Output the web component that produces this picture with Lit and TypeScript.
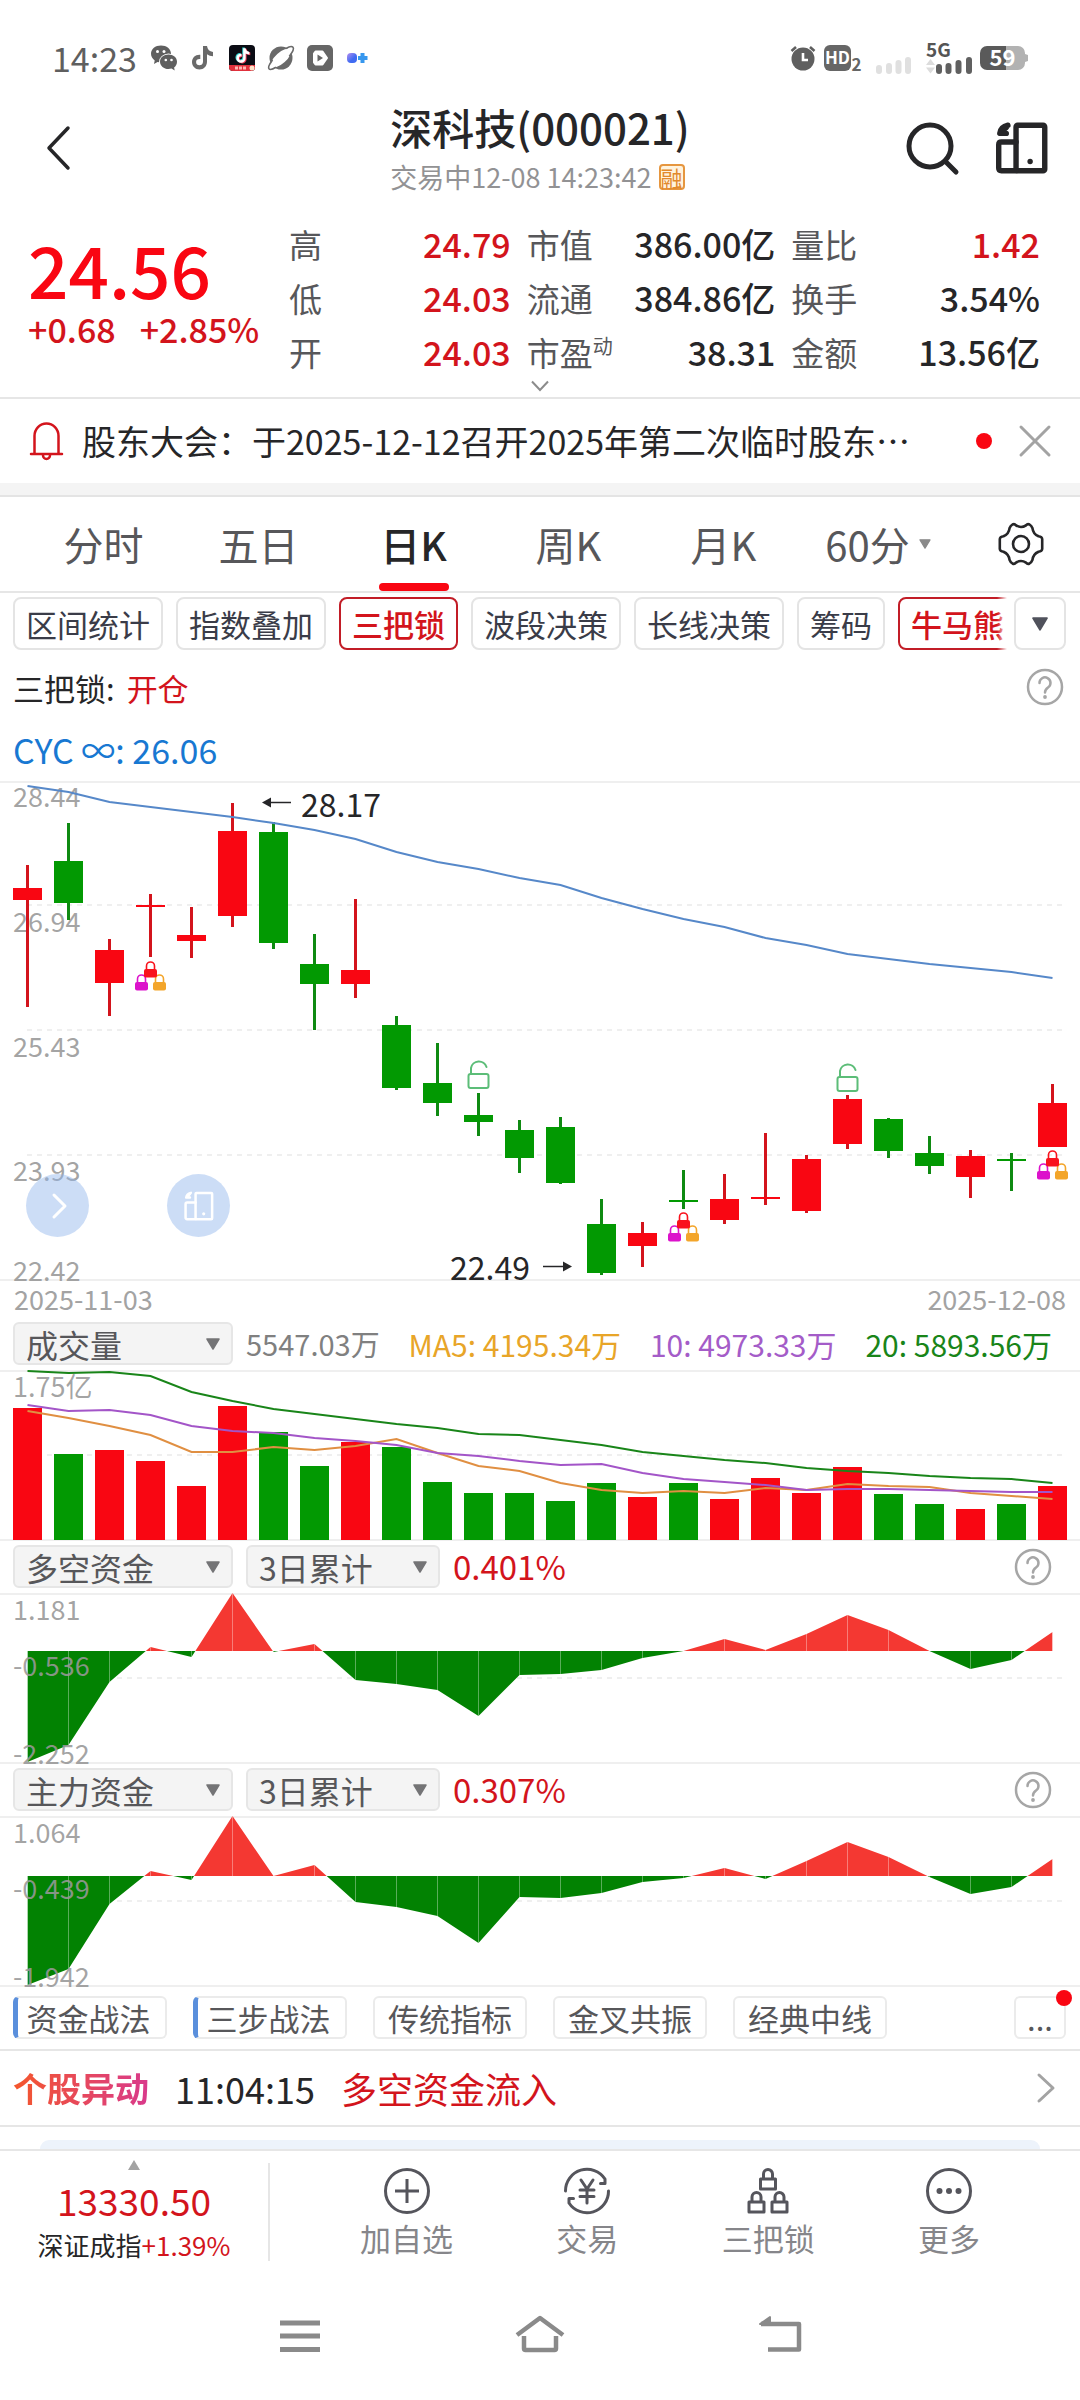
import { LitElement, html, svg, css } from "lit";
import { customElement, property } from "lit/decorators.js";
import { classMap } from "lit/directives/class-map.js";

const UP = "#f90612";
const DOWN = "#029902";
const COUNT = 26;
const cx = (i: number) => 27.5 + i * 41;
const linePoints = (ys: number[]) => ys.map((y, i) => `${cx(i)},${y}`).join(" ");

type Candle = { up: boolean; high: number; top: number; bottom: number; low: number };
const c = (dir: string, high: number, top: number, bottom: number, low: number): Candle => ({
  up: dir === "u", high, top, bottom, low,
});

const CANDLES: Candle[] = [
  c("u", 84, 107, 119, 226), c("d", 42, 80, 122, 139), c("u", 158, 169, 202, 235),
  c("u", 113, 124, 126, 176), c("u", 126, 154, 160, 177), c("u", 22, 50, 135, 146),
  c("d", 41, 51, 162, 168), c("d", 153, 183, 203, 249), c("u", 118, 189, 203, 217),
  c("d", 235, 244, 307, 309), c("d", 262, 302, 322, 335), c("d", 312, 334, 341, 355),
  c("d", 339, 349, 377, 392), c("d", 336, 346, 402, 403), c("d", 418, 443, 492, 494),
  c("u", 441, 452, 465, 486), c("d", 389, 419, 421, 428), c("u", 393, 418, 439, 443),
  c("u", 352, 416, 418, 424), c("u", 374, 378, 430, 432), c("u", 314, 318, 363, 368),
  c("d", 337, 338, 370, 377), c("d", 355, 372, 385, 393), c("u", 369, 375, 396, 417),
  c("d", 372, 378, 380, 410), c("u", 303, 322, 366, 366),
];

const CYC = [5, 11, 21, 26, 31, 36, 42, 49, 58, 71, 81, 88, 97, 104, 117, 128, 138, 146, 157, 164,
  173, 178, 183, 187, 191, 197];

const VOLUME = [38, 84, 80, 91, 116, 36, 62, 96, 72, 77, 112, 123, 123, 131, 113, 127, 113, 129, 108,
  123, 97, 124, 134, 139, 134, 116];
const VOLUME_UP = CANDLES.map((k) => k.up);
const MA5 = [41, 48, 56, 65, 82, 82, 77, 80, 76, 69, 83, 96, 101, 113, 120, 123, 121, 123, 118, 120,
  114, 116, 117, 123, 126, 129];
const MA10 = [35, 41, 40, 45, 56, 61, 63, 68, 71, 75, 83, 86, 91, 95, 94, 103, 109, 112, 115, 120, 119,
  119, 120, 121, 122, 122];
const MA20 = [1, 3, 2, 6, 22, 31, 39, 44, 49, 54, 58, 64, 65, 70, 75, 82, 86, 90, 93, 98, 101, 103, 106,
  108, 109, 113];

const FUND_ALL = [169, 152, 89, 54, 64, 0, 59, 51, 87, 91, 97, 123, 82, 81, 77, 65, 58, 46, 57, 41, 22,
  37, 58, 76, 67, 39];
const FUND_MAIN = [169, 153, 88, 55, 64, 0, 60, 49, 86, 91, 100, 127, 81, 82, 77, 66, 62, 52, 63, 45, 26,
  41, 61, 78, 71, 43];

const chartText = css`
  :host { display: block; }
  .plot { display: block; width: 100%; height: auto; overflow: visible; }
  .axis { font-size: 27px; fill: #989898; fill-opacity: 0.88; }
  .mark { font-size: 32px; fill: #262628; }
  .frame { stroke: #efefef; stroke-width: 2; }
  .dash { stroke: #efefef; stroke-width: 2; stroke-dasharray: 5 5; }
`;

@customElement("price-chart")
class PriceChart extends LitElement {
  static styles = chartText;

  private lock(x: number, y: number, color: string) {
    return svg`<g transform="translate(${x} ${y})">
      <path d="M-4 9V5a4 4 0 0 1 8 0v4" fill="none" stroke=${color} stroke-width="1.6"/>
      <rect x="-6.5" y="8" width="13" height="8.5" rx="2" fill=${color}/></g>`;
  }

  private tripleLock(i: number, y: number) {
    return svg`${this.lock(cx(i) - 9, y + 13, "#dc12cb")}${this.lock(cx(i) + 9, y + 13, "#f3a52a")}
      ${this.lock(cx(i), y, "#f9121c")}`;
  }

  private openLock(i: number, y: number) {
    return svg`<g transform="translate(${cx(i)} ${y})" fill="none" stroke="#5cbd78" stroke-width="2">
      <rect x="-10" y="15" width="20" height="14" rx="2"/>
      <path d="M-7.5 15V9a8 8 0 0 1 15.5-1" stroke-linecap="round"/></g>`;
  }

  render() {
    return html`<svg class="plot" viewBox="0 0 1080 500" role="img" aria-label="日K线图">
      <path class="frame" d="M0 1H1080M0 499H1080" />
      <path class="dash" d="M27 124H1066M27 249H1066M27 374H1066" />
      ${[["28.44", 26], ["26.94", 151], ["25.43", 276], ["23.93", 400], ["22.42", 500]].map(
        ([t, y]) => svg`<text class="axis" x="13" y=${y}>${t}</text>`)}
      ${CANDLES.map((k, i) => svg`<g fill=${k.up ? UP : DOWN}>
        <rect x=${cx(i) - 1.5} y=${k.high} width="3" height=${k.low - k.high}
          fill=${k.up ? "#d3141c" : "#0f8a12"}/>
        <rect x=${cx(i) - 14.5} y=${k.top} width="29" height=${k.bottom - k.top}/></g>`)}
      <polyline points=${linePoints(CYC)} fill="none" stroke="#5688c9" stroke-width="2" />
      ${this.tripleLock(3, 180)}${this.tripleLock(16, 431)}${this.tripleLock(25, 369)}
      ${this.openLock(11, 278)}${this.openLock(20, 281)}
      <path d="M270 21.5H291" stroke="#262628" stroke-width="1.5" />
      <path d="M262 21.5l9-5v10z" fill="#262628" />
      <text class="mark" x="301" y="36">28.17</text>
      <path d="M543 485.5H564" stroke="#262628" stroke-width="1.5" />
      <path d="M572 485.5l-9-5v10z" fill="#262628" />
      <text class="mark" x="450" y="499">22.49</text>
    </svg>`;
  }
}

@customElement("volume-chart")
class VolumeChart extends LitElement {
  static styles = chartText;
  render() {
    return html`<svg class="plot" viewBox="0 0 1080 170" role="img" aria-label="成交量">
      <path class="frame" d="M0 1H1080M0 170H1080" />
      <path class="dash" d="M47 85H1066" />
      <text class="axis" x="13" y="27">1.75亿</text>
      ${VOLUME.map((y, i) => svg`<rect x=${cx(i) - 14.5} y=${y} width="29" height=${170 - y}
        fill=${VOLUME_UP[i] ? UP : DOWN}/>`)}
      <g fill="none" stroke-width="2">
        <polyline points=${linePoints(MA20)} stroke="#198519" />
        <polyline points=${linePoints(MA5)} stroke="#e08f42" />
        <polyline points=${linePoints(MA10)} stroke="#a355c8" />
      </g>
    </svg>`;
  }
}

@customElement("fund-chart")
class FundChart extends LitElement {
  static styles = chartText;
  @property({ attribute: false }) values: number[] = [];
  @property({ attribute: false }) labels: string[] = [];
  @property({ type: Number }) zero = 58;

  render() {
    const z = this.zero;
    const area = `${cx(0)},${z} ${linePoints(this.values)} ${cx(COUNT - 1)},${z}`;
    return html`<svg class="plot" viewBox="0 0 1080 170" role="img" aria-label="资金曲线">
      <defs>
        <clipPath id="above"><rect x="0" y="0" width="1080" height=${z} /></clipPath>
        <clipPath id="below"><rect x="0" y=${z} width="1080" height=${170 - z} /></clipPath>
      </defs>
      <path class="frame" d="M0 1H1080M0 170H1080" />
      <path class="dash" d="M97 85H1066" />
      <polygon points=${area} fill="#f43832" clip-path="url(#above)" />
      <polygon points=${area} fill="#028202" clip-path="url(#below)" />
      ${this.values.map((y, i) => svg`<path d="M${cx(i)} ${z}V${y}" stroke="#fff" stroke-opacity=".35"/>`)}
      <text class="axis" x="13" y="27">${this.labels[0]}</text>
      <text class="axis" x="13" y="83">${this.labels[1]}</text>
      <text class="axis" x="13" y="171">${this.labels[2]}</text>
    </svg>`;
  }
}

const rotateIcon = (cls: string, w: number) => html`<svg class=${cls} viewBox="0 0 48 48" fill="none"
  stroke="currentColor" stroke-width=${w} stroke-linejoin="round" stroke-linecap="round">
  <rect x="18.5" y="3" width="26.5" height="42" rx="1.5" />
  <path d="M18.5 18.5H5q-2.5 0-2.5 2.5V42.5q0 2.5 2.5 2.5h13.5" />
  <path d="M11 3C6.5 4 4 6.5 3.5 10.5h6M4 10L9.5 5" />
  <circle cx="31.5" cy="36.5" r="2.5" fill="currentColor" stroke="none" /></svg>`;

const helpIcon = html`<svg class="help-icon" viewBox="0 0 38 38" fill="none" stroke="#a6a6a6" stroke-width="2.5">
  <circle cx="19" cy="19" r="17" />
  <path d="M13.5 15a5.5 5.5 0 1 1 8.5 4.5c-2 1.5-3 2.5-3 5" stroke-linecap="round" />
  <circle cx="19" cy="29" r="1.9" fill="#a6a6a6" stroke="none" /></svg>`;

@customElement("app-root")
class AppRoot extends LitElement {
  static styles = css`
    :host {
      display: block;
      min-height: 100vh;
      background: #fff;
      color: #262628;
      font-family: "Noto Sans CJK SC", "Noto Sans", sans-serif;
      font-size: 31px;
      line-height: 1;
      overflow: hidden;
    }
    * { box-sizing: border-box; }
    button, select { font: inherit; color: inherit; background: none; border: 0; padding: 0; margin: 0; }
    a { color: inherit; text-decoration: none; }
    svg { display: block; flex: none; overflow: visible; }
    .up { color: #d3141c; }

    .status { display: flex; align-items: center; padding: 40px 52px 24px; height: 100px; color: #5f5f5f; }
    .clock { font-size: 34px; margin-right: 14px; line-height: 36px; }
    .apps { display: flex; gap: 13px; }
    .app { width: 26px; height: 26px; }
    .app-small { width: 22px; height: 26px; }
    .signals { margin-left: auto; display: flex; align-items: center; gap: 8px; }
    .signals .hd { width: 38px; height: 28px; }
    .signals .weak { width: 48px; height: 32px; }
    .signals .five { width: 46px; height: 32px; }
    .signals .battery { width: 48px; height: 26px; }

    .header { display: grid; grid-template-columns: 1fr auto 1fr; align-items: center; height: 100px; padding: 0 32px; }
    .back { width: 48px; height: 64px; padding-bottom: 4px; }
    .back svg { width: 48px; height: 60px; }
    .title { margin: 0; font-size: 42px; font-weight: 500; line-height: 54px; }
    .sub { display: flex; align-items: center; gap: 7px; font-size: 27px; line-height: 46px; color: #929294; }
    .margin-badge { display: grid; place-items: center; width: 26px; height: 26px; font-size: 22px; line-height: 22px; color: #e2892b; border: 2px solid #e6963f; border-radius: 4px; background: #fff3dd; }
    .tools { display: flex; justify-content: flex-end; gap: 37px; padding-bottom: 4px; }
    .tool-icon { width: 52px; height: 52px; }

    .quote { display: grid; grid-template-columns: 245px 222fr 249fr 249fr; column-gap: 16px; padding: 17px 40px 0 28px; }
    .price { padding-top: 10px; font-size: 71px; font-weight: 500; line-height: 82px; color: #f90612; }
    .change { display: flex; gap: 24px; font-size: 34px; font-weight: 500; line-height: 40px; }
    .stats { margin: 0; }
    .stat { display: flex; justify-content: space-between; align-items: center; height: 54px; }
    .stat dt { font-size: 33px; color: #57575a; white-space: nowrap; }
    .stat dt sup { font-size: 20px; line-height: 0; }
    .stat dd { margin: 0; font-size: 34px; font-weight: 500; white-space: nowrap; }
    .expand { display: grid; place-items: center; width: 100%; height: 20px; padding-bottom: 4px; border-bottom: 2px solid #e6e6e6; }
    .expand svg { width: 20px; height: 12px; }

    .notice { display: flex; align-items: center; height: 84px; padding: 0 28px; gap: 18px; }
    .notice .bell { width: 36px; height: 40px; }
    .notice a { flex: 1; font-size: 34px; line-height: 48px; white-space: nowrap; }
    .dot { width: 16px; height: 16px; border-radius: 50%; background: #f90612; flex: none; }
    .close { margin-left: 8px; }
    .close svg { width: 34px; height: 34px; }
    .band { height: 14px; background: #f4f4f4; border-bottom: 2px solid #e4e4e4; }

    .tabs { display: flex; align-items: stretch; height: 96px; padding-left: 26px; border-bottom: 2px solid #e6e6e6; }
    .tab { position: relative; flex: 1; display: flex; align-items: center; justify-content: center; gap: 8px; font-size: 40px; color: #57575a; }
    .tab.on { color: #262628; font-weight: 500; }
    .tab.on::after { content: ""; position: absolute; width: 70px; height: 8px; border-radius: 4px; background: #f90612; bottom: 0; }
    .tab svg { width: 14px; height: 10px; }
    .gear { width: 124px; padding-left: 6px; display: grid; place-items: center; }
    .gear svg { width: 48px; height: 48px; }

    .indicators { display: flex; align-items: center; padding: 4px 14px 0 13px; gap: 7px; }
    .strip { flex: 1; min-width: 0; display: flex; gap: 13px; overflow: hidden; position: relative; }
    .strip::after { content: ""; position: absolute; right: 0; top: 0; bottom: 0; width: 10px; background: linear-gradient(90deg, transparent, #fff); }
    .pill { flex: none; height: 53px; padding: 0 11px; border: 2px solid #e4e4e4; border-radius: 8px; color: #3a3c48; white-space: nowrap; }
    .pill.on { border-color: #c21d27; color: #d3141c; font-weight: 500; }
    .pill.more { width: 52px; display: grid; place-items: center; }
    .pill.more svg { width: 18px; height: 14px; }

    .legend { display: flex; align-items: center; justify-content: space-between; height: 74px; padding: 0 16px 0 13px; }
    .legend-text { display: flex; gap: 12px; }
    .help-icon { width: 38px; height: 38px; }
    .cyc { height: 57px; line-height: 52px; padding-left: 13px; font-size: 34px; color: #1878d2; }

    .chart-box { position: relative; }
    .bubble { position: absolute; bottom: 44px; width: 63px; height: 63px; border-radius: 50%; background: rgba(142, 179, 235, 0.45); color: #fff; display: grid; place-items: center; }
    .bubble-next { left: 26px; }
    .bubble-rotate { left: 167px; }
    .bubble svg { width: 30px; height: 30px; }
    .dates { display: flex; justify-content: space-between; height: 39px; line-height: 35px; padding: 0 14px; font-size: 27px; color: #a3a3a3; }

    .panel-head { display: flex; align-items: center; gap: 13px; padding: 5px 28px 5px 13px; height: 53px; }
    .panel-head.first { height: 50px; padding: 2px 28px 5px 13px; }
    .picker { display: grid; align-items: center; width: 220px; height: 43px; flex: none; }
    .picker.short { width: 194px; }
    .picker select { grid-area: 1 / 1; appearance: none; width: 100%; height: 43px; padding: 0 11px; font-size: 32px; line-height: 40px; background: #f4f4f4; border: 2px solid #e6e6e6; border-radius: 6px; color: #57575a; }
    .picker svg { grid-area: 1 / 1; justify-self: end; margin-right: 13px; width: 14px; height: 12px; pointer-events: none; }
    .averages { flex: 1; display: flex; justify-content: space-between; align-items: center; font-size: 30px; white-space: nowrap; }
    .total { color: #808080; font-size: 29px; }
    .ma5 { color: #e8a528; }
    .ma10 { color: #a45cc8; }
    .ma20 { color: #198519; }
    .fund-value { flex: 1; font-size: 33px; }

    .methods { display: flex; gap: 26px; padding: 10px 14px 10px 13px; border-bottom: 2px solid #e6e6e6; }
    .method { height: 43px; width: 154px; border: 2px solid #ebebeb; border-radius: 6px; color: #57575a; white-space: nowrap; }
    .method.hot { border-left: 5px solid #5a8fdc; padding-right: 6px; }
    .method.extra { position: relative; width: 52px; margin-left: auto; }
    .method.extra .dot { position: absolute; top: -8px; right: -8px; }

    .alert { display: flex; align-items: center; height: 76px; padding: 0 24px 0 13px; border-bottom: 2px solid #e6e6e6; font-size: 36px; }
    .alert-name { font-size: 34px; font-weight: 700; background: linear-gradient(90deg, #f4572c, #d93a8c); -webkit-background-clip: text; background-clip: text; color: transparent; margin-right: 26px; line-height: 48px; }
    .alert-time { margin-right: 26px; }
    .alert svg { width: 20px; height: 32px; margin-left: auto; }
    .peek { padding: 13px 40px 0; }
    .peek-card { height: 9px; overflow: hidden; border-radius: 24px 24px 0 0; background: #edf3fb; }

    .dock { display: flex; border-top: 2px solid #e6e6e6; height: 124px; }
    .index { width: 268px; display: flex; flex-direction: column; align-items: center; padding-top: 9px; }
    .index svg { width: 12px; height: 10px; }
    .index-value { font-size: 37px; line-height: 60px; }
    .index-row { font-size: 26px; line-height: 30px; display: flex; }
    .rule { width: 2px; background: #e6e6e6; margin: 12px 0; }
    .actions { flex: 1; display: flex; justify-content: space-between; padding: 0 100px 0 90px; }
    .action { display: flex; flex-direction: column; align-items: center; padding-top: 15px; color: #86868a; }
    .action svg { width: 50px; height: 50px; color: #55555c; }
    .action span { line-height: 43px; }
    .system { display: flex; justify-content: center; align-items: center; height: 126px; gap: 190px; }
    .system button { color: #8a8a8a; }
    .system svg { width: 50px; height: 50px; }
  `;

  private down(color = "#747476") {
    return html`<svg viewBox="0 0 14 12"><path d="M1 1H13L7 11Z" fill=${color} stroke=${color}
      stroke-width="1.5" stroke-linejoin="round"/></svg>`;
  }

  private picker(label: string, value: string, short = false) {
    return html`<label class=${classMap({ picker: true, short })}>
      <select aria-label=${label}><option>${value}</option></select>${this.down()}</label>`;
  }

  private stats(rows: [unknown, string, boolean][]) {
    return html`<dl class="stats">${rows.map(([k, v, up]) => html`<div class="stat">
      <dt>${k}</dt><dd class=${classMap({ up })}>${v}</dd></div>`)}</dl>`;
  }

  private statusBar() {
    const note = "M14 2h4c.4 3.5 2.5 5.5 6 6v4.2c-2.3 0-4.3-.7-6-1.9v7.5c0 4.5-3.3 7.7-7.5 7.7S3 22.3 3 18s3.400-7.600 8.300-7.200v4.200c-2.600-.4-4.200.9-4.200 3s1.400 3.300 3.300 3.300 3.600-1.300 3.600-3.600z";
    return html`<div class="status">
      <span class="clock">14:23</span>
      <div class="apps">
        <svg class="app" viewBox="0 0 26 26"><path d="M10 .5C4.3.5 0 4 0 8.800c0 2.800 1.500 5 3.700 6.600L3 19l3.500-2c1 .3 2.300.4 3.500.4 5.600 0 10-3.700 10-8.600S15.600.5 10 .5z" fill="#5f5f5f"/>
          <ellipse cx="17.5" cy="17" rx="9.5" ry="8.6" fill="#fff"/>
          <path d="M17.500 9.500c-4.700 0-8.500 3.100-8.500 7.200S12.800 24 17.500 24c1 0 2-.2 3-.4l3.200 2-.6-3c1.700-1.400 2.900-3.400 2.900-5.900 0-4.100-3.800-7.200-8.500-7.200z" fill="#5f5f5f"/>
          <g fill="#fff"><circle cx="6.5" cy="6.5" r="1.5"/><circle cx="13" cy="6.5" r="1.5"/><circle cx="14.8" cy="15" r="1.3"/><circle cx="20.5" cy="15" r="1.3"/></g></svg>
        <svg class="app" viewBox="0 0 26 26"><path d=${note} fill="#6a6a6a" transform="translate(-1 -1)"/></svg>
        <svg class="app" viewBox="0 0 26 26"><rect width="26" height="26" rx="4" fill="#0b0c14"/>
          <g transform="translate(5.5 2) scale(.62)"><path d=${note} fill="#38d9d4" transform="translate(-1.5 -1)"/><path d=${note} fill="#ee3a55" transform="translate(1.5 1)"/><path d=${note} fill="#fff"/></g>
          <path d="M0 20h26v2a4 4 0 0 1-4 4H4a4 4 0 0 1-4-4z" fill="#e0303c"/><path d="M6 23h12" stroke="#ffb4b0" stroke-width="3" stroke-dasharray="3 1"/><circle cx="23" cy="23" r="2.5" fill="#ffe2c8"/></svg>
        <svg class="app" viewBox="0 0 26 26"><circle cx="13" cy="13" r="11.5" fill="#6a6a6a"/>
          <ellipse cx="13" cy="13" rx="12.5" ry="5.5" transform="rotate(-42 13 13)" fill="#fff"/>
          <path d="M18 3.500c3-1.800 6-2.300 7-1.200 1.200 1.400-.5 5-3.700 9M4.500 15C1.500 19 0 22.500 1 23.800c1 1.200 4 .3 7-1.500" fill="none" stroke="#6a6a6a" stroke-width="1.6"/></svg>
        <svg class="app" viewBox="0 0 26 26"><rect width="26" height="26" rx="5" fill="#666"/>
          <path d="M8.500 6.500h7l4.500 6.500-4.500 6.500h-7l-1.500-2v-9z" fill="#fff" stroke="#fff" stroke-width="2" stroke-linejoin="round"/><path d="M10.500 9.500v7l5.500-3.500z" fill="#666"/></svg>
        <svg class="app-small" viewBox="0 0 22 26"><defs><linearGradient id="duo" x1="0" y1="0" x2="1" y2="1"><stop stop-color="#b48ef0"/><stop offset=".6" stop-color="#3f6bf2"/></linearGradient></defs>
          <rect x="1" y="8" width="10" height="10" rx="4" fill="url(#duo)"/><path d="M16.500 8v10M12 13h9.500" stroke="#3797ee" stroke-width="4"/></svg>
      </div>
      <div class="signals">
        <svg class="app" viewBox="0 0 26 26"><circle cx="13" cy="14" r="11.5" fill="#5f5f5f"/><path d="M13 8v7h5" stroke="#fff" stroke-width="2.6" fill="none"/><path d="M1.500 6L6 2M24.500 6L20 2" stroke="#5f5f5f" stroke-width="2.6"/></svg>
        <svg class="hd" viewBox="0 0 38 28"><rect y="1" width="27" height="26" rx="6" fill="#666"/><text x="13.5" y="20" font-size="17" font-weight="700" fill="#fff" text-anchor="middle">HD</text><text x="27.5" y="27" font-size="17" font-weight="700" fill="#666">2</text></svg>
        <svg class="weak" viewBox="8 0 48 32"><path d="M17 26v3M27 24v5M36.500 21v8M46 18v11" stroke="#e0e0e0" stroke-width="6" stroke-linecap="round"/></svg>
        <svg class="five" viewBox="0 0 46 32"><text x="0" y="15" font-size="19" font-weight="700" fill="#555">5G</text><path d="M0 23l4.500-6 4.500 6zM0 25.500l4.500 6 4.500-6z" fill="#dcdcdc"/><path d="M13 25v4M22.500 24v5M32.500 21v8M43 18v11" stroke="#606060" stroke-width="6" stroke-linecap="round"/></svg>
        <svg class="battery" viewBox="0 0 48 26"><path d="M7 1h19v24H7a7 7 0 0 1-7-7V8a7 7 0 0 1 7-7z" fill="#5a5a5a"/><path d="M26 1h12a7 7 0 0 1 7 7v1l3 1v6l-3 1v1a7 7 0 0 1-7 7H26z" fill="#b2b2b2"/><text x="22.5" y="21" font-size="22" font-weight="700" fill="#fff" text-anchor="middle">59</text></svg>
      </div>
    </div>`;
  }

  render() {
    const tabs = ["分时", "五日", "日K", "周K", "月K", "60分"];
    const pills = ["区间统计", "指数叠加", "三把锁", "波段决策", "长线决策", "筹码", "牛马熊"];
    const methods = ["资金战法", "三步战法", "传统指标", "金叉共振", "经典中线"];
    return html`
      ${this.statusBar()}
      <header class="header">
        <button class="back" aria-label="返回"><svg viewBox="0 0 48 60" fill="none" stroke="#262628" stroke-width="3.5" stroke-linecap="round" stroke-linejoin="round"><path d="M36 10L17 30 36 50"/></svg></button>
        <div>
          <h1 class="title">深科技(000021)</h1>
          <div class="sub"><span>交易中12-08 14:23:42</span><span class="margin-badge">融</span></div>
        </div>
        <div class="tools">
          <button aria-label="搜索"><svg class="tool-icon" viewBox="0 0 52 52" fill="none" stroke="#262628" stroke-width="5" stroke-linecap="round"><circle cx="23" cy="24" r="21"/><path d="M39 40L49 50"/></svg></button>
          <button aria-label="横屏">${rotateIcon("tool-icon", 5)}</button>
        </div>
      </header>

      <section class="quote">
        <div><div class="price">24.56</div><div class="change up"><span>+0.68</span><span>+2.85%</span></div></div>
        ${this.stats([["高", "24.79", true], ["低", "24.03", true], ["开", "24.03", true]])}
        ${this.stats([["市值", "386.00亿", false], ["流通", "384.86亿", false], [html`市盈<sup>动</sup>`, "38.31", false]])}
        ${this.stats([["量比", "1.42", true], ["换手", "3.54%", false], ["金额", "13.56亿", false]])}
      </section>
      <button class="expand" aria-label="展开"><svg viewBox="0 0 20 12" fill="none" stroke="#8c8c8c" stroke-width="2"><path d="M2 1.500L10 10 18 1.500"/></svg></button>

      <div class="notice">
        <svg class="bell" viewBox="0 0 36 40" fill="none" stroke="#d3141c" stroke-width="2.5" stroke-linecap="round"><path d="M6.500 33V15a12 12.500 0 0 1 24 0v18M3 33h31M15 34.500a3.500 3.500 0 0 0 7 0"/></svg>
        <a href="#notice">股东大会：于2025-12-12召开2025年第二次临时股东⋯</a>
        <span class="dot"></span>
        <button class="close" aria-label="关闭"><svg viewBox="0 0 34 34" stroke="#a3a3a3" stroke-width="3" stroke-linecap="round"><path d="M3 3L31 31M31 3L3 31"/></svg></button>
      </div>
      <div class="band"></div>

      <nav class="tabs">
        ${tabs.map((t) => html`<button class=${classMap({ tab: true, on: t === "日K" })}>${t}${t === "60分" ? this.down("#8a8a8a") : ""}</button>`)}
        <button class="gear" aria-label="设置"><svg viewBox="0 0 48 48" fill="none" stroke="#262628" stroke-width="2.6" stroke-linejoin="round">
          <path d="M15.500 4.500q2-1 3.500.8 5 3.400 10 0 1.500-1.800 3.500-.8 2 1.200 3 3.800.6 5.500 6 8 3.500.4 3.700 2.700v10q-.2 2.300-3.700 2.700-5.400 2.500-6 8-1 2.600-3 3.800-2 1-3.500-.8-5-3.400-10 0-1.500 1.800-3.500.8-2-1.200-3-3.800-.6-5.500-6-8-3.500-.4-3.700-2.700V19q.2-2.300 3.700-2.700 5.400-2.500 6-8 1-2.600 3-3.800z"/><circle cx="24" cy="24" r="8"/></svg></button>
      </nav>

      <div class="indicators">
        <div class="strip">
          ${pills.map((p) => html`<button class=${classMap({ pill: true, on: p === "三把锁" || p === "牛马熊" })}>${p}</button>`)}
        </div>
        <button class="pill more" aria-label="更多指标">${this.down("#50525c")}</button>
      </div>

      <div class="legend">
        <div class="legend-text"><span>三把锁:</span><span class="up">开仓</span></div>
        <button aria-label="帮助">${helpIcon}</button>
      </div>
      <div class="cyc">CYC ∞: 26.06</div>

      <div class="chart-box">
        <price-chart></price-chart>
        <button class="bubble bubble-next" aria-label="下一个"><svg viewBox="0 0 30 30" fill="none" stroke="currentColor" stroke-width="3" stroke-linecap="round" stroke-linejoin="round"><path d="M11 4L22 15 11 26"/></svg></button>
        <button class="bubble bubble-rotate" aria-label="横屏">${rotateIcon("", 4)}</button>
      </div>
      <div class="dates"><span>2025-11-03</span><span>2025-12-08</span></div>

      <div class="panel-head first">
        ${this.picker("指标", "成交量")}
        <div class="averages"><span class="total">5547.03万</span><span class="ma5">MA5: 4195.34万</span><span class="ma10">10: 4973.33万</span><span class="ma20">20: 5893.56万</span></div>
      </div>
      <volume-chart></volume-chart>

      <div class="panel-head">
        ${this.picker("指标", "多空资金")}${this.picker("周期", "3日累计", true)}
        <span class="fund-value up">0.401%</span><button aria-label="帮助">${helpIcon}</button>
      </div>
      <fund-chart .values=${FUND_ALL} .labels=${["1.181", "-0.536", "-2.252"]} .zero=${58}></fund-chart>

      <div class="panel-head">
        ${this.picker("指标", "主力资金")}${this.picker("周期", "3日累计", true)}
        <span class="fund-value up">0.307%</span><button aria-label="帮助">${helpIcon}</button>
      </div>
      <fund-chart .values=${FUND_MAIN} .labels=${["1.064", "-0.439", "-1.942"]} .zero=${60}></fund-chart>

      <div class="methods">
        ${methods.map((m, i) => html`<button class=${classMap({ method: true, hot: i < 2 })}>${m}</button>`)}
        <button class="method extra">...<span class="dot"></span></button>
      </div>

      <a class="alert" href="#alert">
        <span class="alert-name">个股异动</span><span class="alert-time">11:04:15</span><span class="up">多空资金流入</span>
        <svg viewBox="0 0 20 32" fill="none" stroke="#a3a3a3" stroke-width="3" stroke-linecap="round" stroke-linejoin="round"><path d="M3 3L17 16 3 29"/></svg>
      </a>
      <div class="peek"><div class="peek-card"></div></div>

      <footer class="dock">
        <div class="index">
          <svg viewBox="0 0 12 10"><path d="M6 0L12 10H0Z" fill="#a3a3a3"/></svg>
          <span class="index-value up">13330.50</span>
          <span class="index-row"><span>深证成指</span><span class="up">+1.39%</span></span>
        </div>
        <div class="rule"></div>
        <div class="actions">
          <button class="action"><svg viewBox="0 0 50 50" fill="none" stroke="currentColor" stroke-width="3"><circle cx="25" cy="25" r="21.5"/><path d="M25 13v24M13 25h24"/></svg><span>加自选</span></button>
          <button class="action"><svg viewBox="0 0 50 50" fill="none" stroke="currentColor" stroke-width="3" stroke-linecap="round" stroke-linejoin="round"><path d="M3.500 25A21.500 21.500 0 0 1 43 13V17.500H38.500M46.500 25A21.500 21.500 0 0 1 7 37V32.500H11.500"/><path d="M19 14l6 9 6-9M25 23v14M18 24h14M18 30.500h14"/></svg><span>交易</span></button>
          <button class="action"><svg viewBox="0 0 50 50" fill="none" stroke="currentColor" stroke-width="3" stroke-linejoin="round"><rect x="17.5" y="13" width="15" height="10"/><path d="M20.500 13V8a4.500 4.500 0 0 1 9 0v5"/><rect x="6" y="36" width="15" height="10"/><path d="M9 36v-5a4.500 4.500 0 0 1 9 0v5"/><rect x="29" y="36" width="15" height="10"/><path d="M32 36v-5a4.500 4.500 0 0 1 9 0v5"/></svg><span>三把锁</span></button>
          <button class="action"><svg viewBox="0 0 50 50" fill="none" stroke="currentColor" stroke-width="3"><circle cx="25" cy="25" r="21.5"/><g fill="currentColor" stroke="none"><circle cx="15.5" cy="25" r="3"/><circle cx="25" cy="25" r="3"/><circle cx="34.5" cy="25" r="3"/></g></svg><span>更多</span></button>
        </div>
      </footer>
      <div class="system">
        <button aria-label="菜单"><svg viewBox="0 0 50 50" stroke="currentColor" stroke-width="5"><path d="M5 12H45M5 25H45M5 38.500H45"/></svg></button>
        <button aria-label="主页"><svg viewBox="0 0 50 50" fill="none" stroke="currentColor" stroke-width="4.5" stroke-linejoin="round"><path d="M2 24L25 7 48 24M9 25V37.500Q9 39 10.500 39H39.500Q41 39 41 37.500V25"/></svg></button>
        <button aria-label="后退"><svg viewBox="0 0 50 50" fill="none" stroke="currentColor" stroke-width="4.5" stroke-linejoin="round"><path d="M6 13H44V38.500H13"/><path d="M5 13l10-7v7z" fill="currentColor" stroke-width="2"/></svg></button>
      </div>
    `;
  }
}
